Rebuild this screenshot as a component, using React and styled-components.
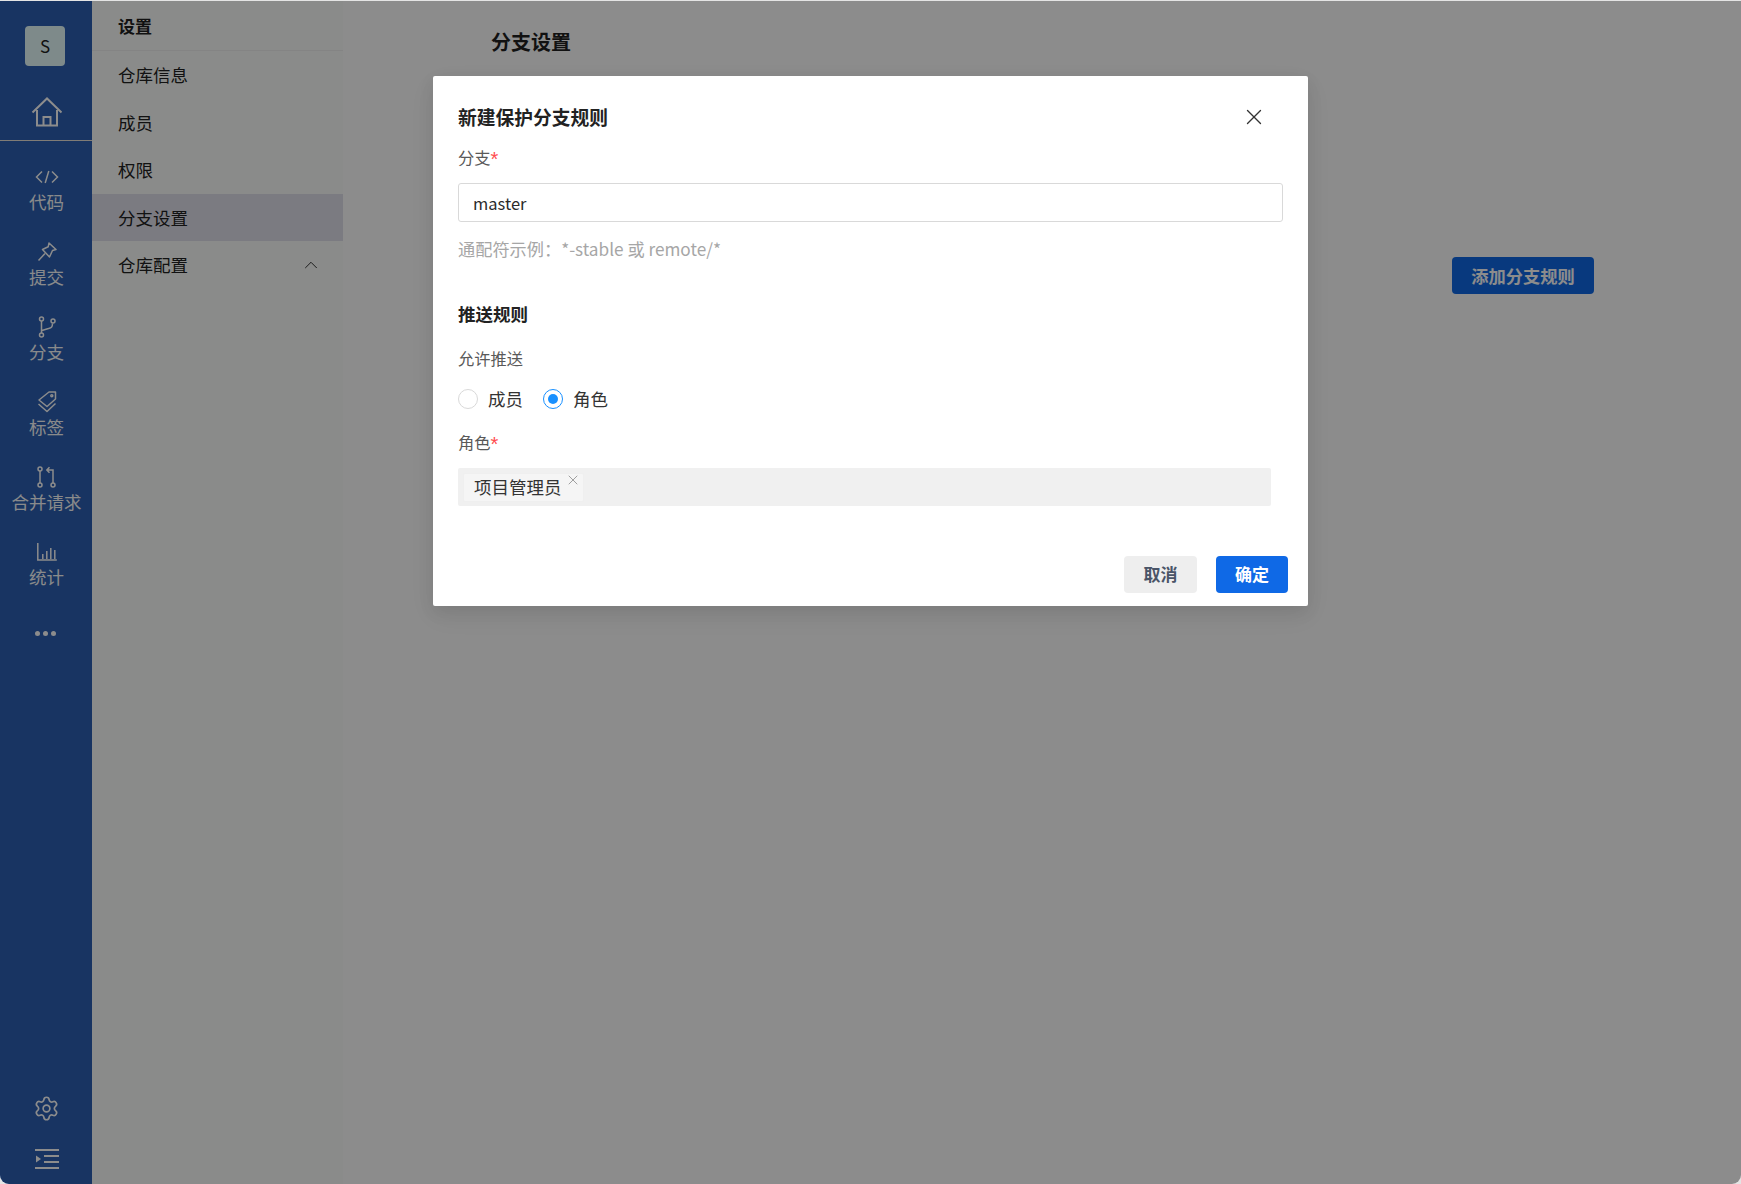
import styled, { createGlobalStyle } from "styled-components";
import { ChevronUp, Settings, X } from "lucide-react";

const FONT = `"Noto Sans CJK SC", "Noto Sans", sans-serif`;

const GlobalStyle = createGlobalStyle`
  html, body { margin: 0; padding: 0; background: #e4e4e4; }
  * { box-sizing: border-box; }
  body { font-family: ${FONT}; }
`;

const Shell = styled.div`
  position: relative;
  display: flex;
  width: 1741px;
  height: 1183px;
  margin-top: 1px;
  overflow: hidden;
  background: #fff;
  border-radius: 0 0 9px 9px;
`;

const Rail = styled.nav`
  flex: 0 0 92px;
  display: flex;
  flex-direction: column;
  align-items: stretch;
  padding-top: 25px;
  background: #2c5fb2;
  color: #fff;
`;

const Avatar = styled.div`
  align-self: center;
  width: 40px;
  height: 40px;
  margin-left: -2px;
  border-radius: 4px;
  background: #e6fcfc;
  color: #222;
  font-size: 17px;
  line-height: 40px;
  text-align: center;
`;

const HomeLink = styled.div`
  display: flex;
  justify-content: center;
  height: 75px;
  margin-bottom: 10px;
  padding: 31px 0 0 1px;
  border-bottom: 1px solid #eae2d8;
`;

const RailItem = styled.div`
  height: 75px;
  padding: 13px 0 0 1px;
  display: flex;
  flex-direction: column;
  align-items: center;
`;

const RailIcon = styled.div`
  height: 26px;
  display: flex;
  align-items: center;
  justify-content: center;
`;

const RailText = styled.div`
  margin-top: -1px;
  font-size: 17.5px;
  line-height: 26px;
  white-space: nowrap;
  opacity: 0.98;
`;

const Dots = styled.div`
  display: flex;
  justify-content: center;
  gap: 3px;
  height: 64px;
  align-items: center;
  margin-left: -1px;
  & i { width: 5px; height: 5px; border-radius: 50%; background: #fff; }
`;

const RailFoot = styled.div`
  margin-top: auto;
  display: flex;
  flex-direction: column;
  align-items: center;
  gap: 27px;
  padding: 0 0 15px 1px;
`;

const SideMenu = styled.aside`
  flex: 0 0 251px;
  background: #fbfdfb;
`;

const SideTitle = styled.div`
  height: 50px;
  padding-left: 26px;
  font-size: 17px;
  font-weight: 700;
  line-height: 50px;
  color: #1f1f1f;
  border-bottom: 1px solid #f0f1f0;
`;

const SideItem = styled.div`
  display: flex;
  align-items: center;
  justify-content: space-between;
  height: 47.5px;
  padding: 0 21px 0 26px;
  font-size: 17.5px;
  color: #222;
  background: ${(p) => (p.$active ? "#e1e1ec" : "transparent")};
`;

const Main = styled.main`
  flex: 1;
  display: flex;
  flex-direction: column;
  padding: 26px 147px 0 148px;
`;

const PageTitle = styled.h1`
  margin: 0;
  font-size: 20px;
  font-weight: 700;
  line-height: 30px;
  color: #1f1f1f;
`;

const AddButton = styled.div`
  align-self: flex-end;
  width: 142px;
  height: 37px;
  margin-top: 200px;
  border-radius: 4px;
  background: #0f69e6;
  color: #fff;
  font-size: 17.25px;
  font-weight: 700;
  line-height: 37px;
  text-align: center;
`;

const Mask = styled.div`
  position: absolute;
  inset: 0;
  background: rgba(0, 0, 0, 0.45);
`;

const Modal = styled.section`
  position: absolute;
  top: 75px;
  left: 433px;
  width: 875px;
  padding: 24px 25px 13px;
  background: #fff;
  border-radius: 2px;
  box-shadow: 0 6px 16px rgba(0, 0, 0, 0.08), 0 9px 28px rgba(0, 0, 0, 0.05);
`;

const ModalHead = styled.div`
  display: flex;
  align-items: center;
  justify-content: space-between;
  height: 34px;
  padding: 0 21px 2px 0;
  font-size: 18.75px;
  font-weight: 700;
  color: #222;
`;

const CloseIcon = styled(X)`
  margin: 2px -5px 0 0;
  color: #333;
`;

const Label = styled.div`
  margin-top: ${(p) => p.$top}px;
  font-size: 16.25px;
  line-height: 24px;
  color: #595959;
  & em {
    font-family: "Liberation Sans", sans-serif;
    font-style: normal;
    font-size: 20px;
    line-height: 0;
    vertical-align: -2px;
    color: #ff4d4f;
  }
`;

const TextInput = styled.input`
  display: block;
  width: 100%;
  height: 39px;
  margin-top: 14px;
  padding: 0 14px;
  border: 1px solid #d9d9d9;
  border-radius: 3px;
  outline: none;
  font-family: ${FONT};
  font-size: 16.5px;
  color: #2b2b2b;
`;

const Hint = styled.div`
  margin-top: 15px;
  font-size: 17.2px;
  line-height: 24px;
  color: #a6a6a6;
`;

const Section = styled.div`
  margin-top: 41px;
  font-size: 17.5px;
  font-weight: 700;
  line-height: 24px;
  color: #222;
`;

const RadioRow = styled.div`
  display: flex;
  align-items: center;
  height: 24px;
  margin-top: 16px;
`;

const RadioOption = styled.label`
  display: flex;
  align-items: center;
  margin-right: 20px;
  font-size: 17.5px;
  color: #333;
`;

const RadioDot = styled.span`
  display: flex;
  align-items: center;
  justify-content: center;
  width: 20px;
  height: 20px;
  margin: 1px 10px 0 0;
  border-radius: 50%;
  border: 1px solid ${(p) => (p.$checked ? "#1890ff" : "#d9d9d9")};
  &::after {
    content: "";
    display: ${(p) => (p.$checked ? "block" : "none")};
    width: 10px;
    height: 10px;
    border-radius: 50%;
    background: #1890ff;
  }
`;

const SelectBox = styled.div`
  display: flex;
  align-items: center;
  width: 813px;
  height: 38px;
  margin-top: 14px;
  padding-left: 5px;
  border-radius: 2px;
  background: #f0f0f0;
`;

const Tag = styled.div`
  position: relative;
  width: 121px;
  height: 29px;
  padding-left: 10px;
  border: 1px solid #efefef;
  border-radius: 2px;
  background: #f5f5f5;
  font-size: 17.5px;
  line-height: 26px;
  color: #333;
`;

const TagClose = styled.span`
  position: absolute;
  top: -2px;
  right: 2px;
  display: flex;
  color: #808080;
`;

const ModalFoot = styled.div`
  display: flex;
  justify-content: flex-end;
  gap: 19px;
  margin: 50px -5px 0 0;
`;

const FootButton = styled.div`
  width: ${(p) => (p.$primary ? 72 : 73)}px;
  height: 37px;
  border-radius: 4px;
  background: ${(p) => (p.$primary ? "#0f69e6" : "#eeeeee")};
  color: ${(p) => (p.$primary ? "#fff" : "#4a5568")};
  font-size: 17px;
  font-weight: 700;
  line-height: 36px;
  text-align: center;
`;

const HomeIcon = () => (
  <svg width="32" height="30" viewBox="0 0 32 30" fill="none" stroke="currentColor" strokeWidth="2">
    <path d="M1.5 15.5 16 1.5l14.500 14" />
    <path d="M6 13v15.500h20V13" />
    <path d="M12.500 28V20h7v8" />
  </svg>
);

const CodeIcon = () => (
  <svg width="24" height="14" viewBox="0 0 24 14" fill="none" stroke="currentColor" strokeWidth="1.500">
    <path d="M7 1.500 1.500 7 7 12.500M17 1.500 22.500 7 17 12.500M13.800 1 10.200 13" />
  </svg>
);

const PinIcon = () => (
  <svg width="20" height="20" viewBox="0 0 20 20" fill="none" stroke="currentColor" strokeWidth="1.500" strokeLinejoin="round">
    <path d="M12 1 19 7.500l-3.500 1L12.500 15 5.500 7.500 11.200 4.800z" />
    <path d="M8 11.500 1.500 18.500" />
  </svg>
);

const BranchIcon = () => (
  <svg width="18" height="22" viewBox="0 0 18 22" fill="none" stroke="currentColor" strokeWidth="1.500">
    <circle cx="3.500" cy="3" r="2" />
    <circle cx="3.500" cy="19" r="2" />
    <circle cx="15" cy="5" r="2" />
    <path d="M3.500 5v12M14.500 7.500c0 3.500-1 4-4 5L4 14.500" />
  </svg>
);

const TagIcon = () => (
  <svg width="20" height="22" viewBox="0 0 20 22" fill="none" stroke="currentColor" strokeWidth="1.500" strokeLinejoin="round">
    <path d="M12 1h6.500v7L10 15.500 2 9z" />
    <path d="M1.500 13 10 20.500 18.500 12.500" />
    <circle cx="14.800" cy="4.800" r="1" />
  </svg>
);

const PullIcon = () => (
  <svg width="20" height="22" viewBox="0 0 20 22" fill="none" stroke="currentColor" strokeWidth="1.500">
    <circle cx="3" cy="3" r="2" />
    <circle cx="3" cy="19" r="2" />
    <circle cx="16" cy="19" r="2" />
    <path d="M3 5v12M16 17V4H10M12.500 1.200 9.800 4l2.700 2.800" />
  </svg>
);

const ChartIcon = () => (
  <svg width="20" height="18" viewBox="0 0 20 18" fill="none" stroke="currentColor" strokeWidth="1.500">
    <path d="M1 0v17h19M6 16v-5M10 16V8M14 16V5M18 16V7" transform="translate(-.2 0)" />
  </svg>
);

const IndentIcon = () => (
  <svg width="24" height="20" viewBox="0 0 24 20" fill="currentColor">
    <rect y="0" width="24" height="2" />
    <rect x="9" y="6" width="15" height="2" />
    <rect x="9" y="12" width="15" height="2" />
    <rect y="18" width="24" height="2" />
    <path d="M1 6.500 6 10l-5 3.500z" />
  </svg>
);

const navItems = [
  { text: "代码", icon: <CodeIcon /> },
  { text: "提交", icon: <PinIcon /> },
  { text: "分支", icon: <BranchIcon /> },
  { text: "标签", icon: <TagIcon /> },
  { text: "合并请求", icon: <PullIcon /> },
  { text: "统计", icon: <ChartIcon /> },
];

const menuItems = ["仓库信息", "成员", "权限", "分支设置"];

const App = () => {
  return (
    <>
      <GlobalStyle />
      <Shell>
        <Rail>
          <Avatar>S</Avatar>
          <HomeLink>
            <HomeIcon />
          </HomeLink>
          {navItems.map((item) => (
            <RailItem key={item.text}>
              <RailIcon>{item.icon}</RailIcon>
              <RailText>{item.text}</RailText>
            </RailItem>
          ))}
          <Dots>
            <i />
            <i />
            <i />
          </Dots>
          <RailFoot>
            <Settings size={27} strokeWidth={1.5} />
            <IndentIcon />
          </RailFoot>
        </Rail>
        <SideMenu>
          <SideTitle>设置</SideTitle>
          {menuItems.map((name) => (
            <SideItem key={name} $active={name === "分支设置"}>
              {name}
            </SideItem>
          ))}
          <SideItem>
            仓库配置
            <ChevronUp size={22} strokeWidth={1} />
          </SideItem>
        </SideMenu>
        <Main>
          <PageTitle>分支设置</PageTitle>
          <AddButton>添加分支规则</AddButton>
        </Main>
        <Mask />
        <Modal>
          <ModalHead>
            新建保护分支规则
            <CloseIcon size={26} strokeWidth={1.25} />
          </ModalHead>
          <Label $top={11}>
            分支<em>*</em>
          </Label>
          <TextInput value="master" readOnly />
          <Hint>通配符示例：*-stable 或 remote/*</Hint>
          <Section>推送规则</Section>
          <Label $top={20}>允许推送</Label>
          <RadioRow>
            <RadioOption>
              <RadioDot />
              成员
            </RadioOption>
            <RadioOption>
              <RadioDot $checked />
              角色
            </RadioOption>
          </RadioRow>
          <Label $top={20}>
            角色<em>*</em>
          </Label>
          <SelectBox>
            <Tag>
              项目管理员
              <TagClose>
                <X size={16} strokeWidth={1.1} />
              </TagClose>
            </Tag>
          </SelectBox>
          <ModalFoot>
            <FootButton>取消</FootButton>
            <FootButton $primary>确定</FootButton>
          </ModalFoot>
        </Modal>
      </Shell>
    </>
  );
};

export default App;
